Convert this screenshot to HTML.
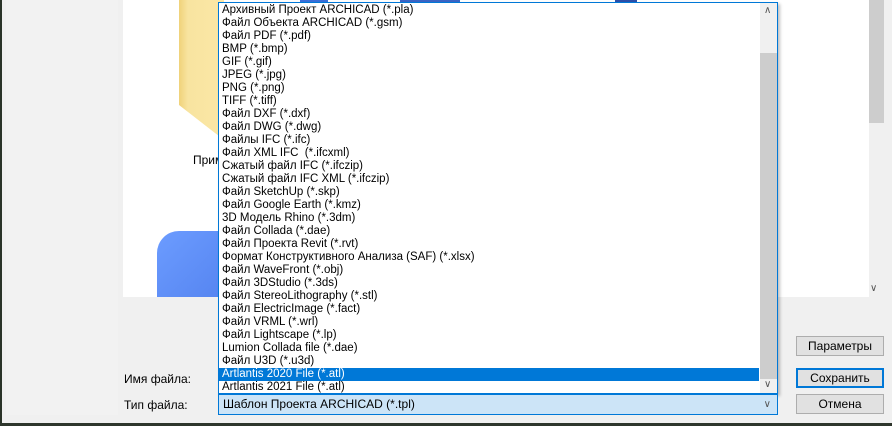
<!DOCTYPE html>
<html><head><meta charset="utf-8"><style>
*{margin:0;padding:0;box-sizing:border-box}
body{width:892px;height:426px;position:relative;overflow:hidden;background:#f0f0f0;font-family:"Liberation Sans","DejaVu Sans",sans-serif;font-size:11.5px;color:#000}
.a{position:absolute}
.list .r{height:13px;line-height:13px;padding-left:3px;white-space:nowrap}
.btn{position:absolute;left:796px;width:88px;height:20px;background:#e1e1e1;border:1px solid #adadad;text-align:center;line-height:18px;font-size:12px}
</style></head><body>
<div class="a" style="left:0;top:0;width:2px;height:426px;background:#2a3328"></div>
<div class="a" style="left:0;top:423px;width:892px;height:3px;background:#2e362c"></div>
<div class="a" style="left:6px;top:0;width:112px;height:415px;background:#f2f2f2"></div>
<div class="a" style="left:123px;top:0;width:746px;height:297px;background:#fff"></div>
<div class="a" style="left:179px;top:0;width:45px;height:140px;background:linear-gradient(90deg,#f0d27a,#f8e4a0 20%,#fbe7a6);clip-path:polygon(0 0,100% 0,100% 100%,0 75%)"></div>
<div class="a" style="left:193px;top:153px;font-size:12px">Прим</div>
<div class="a" style="left:157px;top:231px;width:70px;height:66px;background:linear-gradient(135deg,#6c9cff,#5584f0);border-top-left-radius:22px"></div>
<div class="a" style="left:300px;top:0;width:28px;height:3px;background:#3a6fd8"></div>
<div class="a" style="left:400px;top:0;width:60px;height:3px;background:#3b64c4"></div>
<div class="a" style="left:615px;top:0;width:22px;height:3px;background:#2c4fa8"></div>
<div class="a" style="left:869px;top:0;width:15px;height:123px;background:#cdcdcd"></div>
<div class="a" style="left:870px;top:283px;font-size:10px;color:#555">&#x2228;</div>
<div class="a list" style="left:218px;top:2px;width:560px;height:392px;background:#fff;border:1px solid #0078d7;box-shadow:2px 2px 3px rgba(0,0,0,.25);padding-top:1px">
<div class="a" style="left:541px;top:0;width:17px;height:390px;background:#f0f0f0"></div>
<div class="a" style="left:541px;top:50px;width:17px;height:326px;background:#cdcdcd"></div>
<div class="a" style="left:545px;top:2px;font-size:10px;color:#555">&#x2227;</div>
<div class="a" style="left:545px;top:376px;font-size:10px;color:#555">&#x2228;</div>
<div style="width:540px">
<div class="r">Архивный Проект ARCHICAD (*.pla)</div>
<div class="r">Файл Объекта ARCHICAD (*.gsm)</div>
<div class="r">Файл PDF (*.pdf)</div>
<div class="r">BMP (*.bmp)</div>
<div class="r">GIF (*.gif)</div>
<div class="r">JPEG (*.jpg)</div>
<div class="r">PNG (*.png)</div>
<div class="r">TIFF (*.tiff)</div>
<div class="r">Файл DXF (*.dxf)</div>
<div class="r">Файл DWG (*.dwg)</div>
<div class="r">Файлы IFC (*.ifc)</div>
<div class="r">Файл XML IFC &nbsp;(*.ifcxml)</div>
<div class="r">Сжатый файл IFC (*.ifczip)</div>
<div class="r">Сжатый файл IFC XML (*.ifczip)</div>
<div class="r">Файл SketchUp (*.skp)</div>
<div class="r">Файл Google Earth (*.kmz)</div>
<div class="r">3D Модель Rhino (*.3dm)</div>
<div class="r">Файл Collada (*.dae)</div>
<div class="r">Файл Проекта Revit (*.rvt)</div>
<div class="r">Формат Конструктивного Анализа (SAF) (*.xlsx)</div>
<div class="r">Файл WaveFront (*.obj)</div>
<div class="r">Файл 3DStudio (*.3ds)</div>
<div class="r">Файл StereoLithography (*.stl)</div>
<div class="r">Файл ElectricImage (*.fact)</div>
<div class="r">Файл VRML (*.wrl)</div>
<div class="r">Файл Lightscape (*.lp)</div>
<div class="r">Lumion Collada file (*.dae)</div>
<div class="r">Файл U3D (*.u3d)</div>
<div class="r" style="background:#0078d7;color:#fff">Artlantis 2020 File (*.atl)</div>
<div class="r">Artlantis 2021 File (*.atl)</div>
</div></div>
<div class="a" style="left:124px;top:372px;font-size:12px">Имя файла:</div>
<div class="a" style="left:124px;top:398px;font-size:12px">Тип файла:</div>
<div class="a" style="left:218px;top:394px;width:560px;height:21px;background:#cce4f7;border:1px solid #0078d7;line-height:19px;padding-left:4px;font-size:12px">Шаблон Проекта ARCHICAD (*.tpl)<span class="a" style="right:6px;top:0;font-size:10px;color:#555">&#x2228;</span></div>
<div class="btn" style="top:336px">Параметры</div>
<div class="btn" style="top:368px;border:2px solid #0078d7;line-height:16px">Сохранить</div>
<div class="btn" style="top:394px">Отмена</div>
</body></html>
